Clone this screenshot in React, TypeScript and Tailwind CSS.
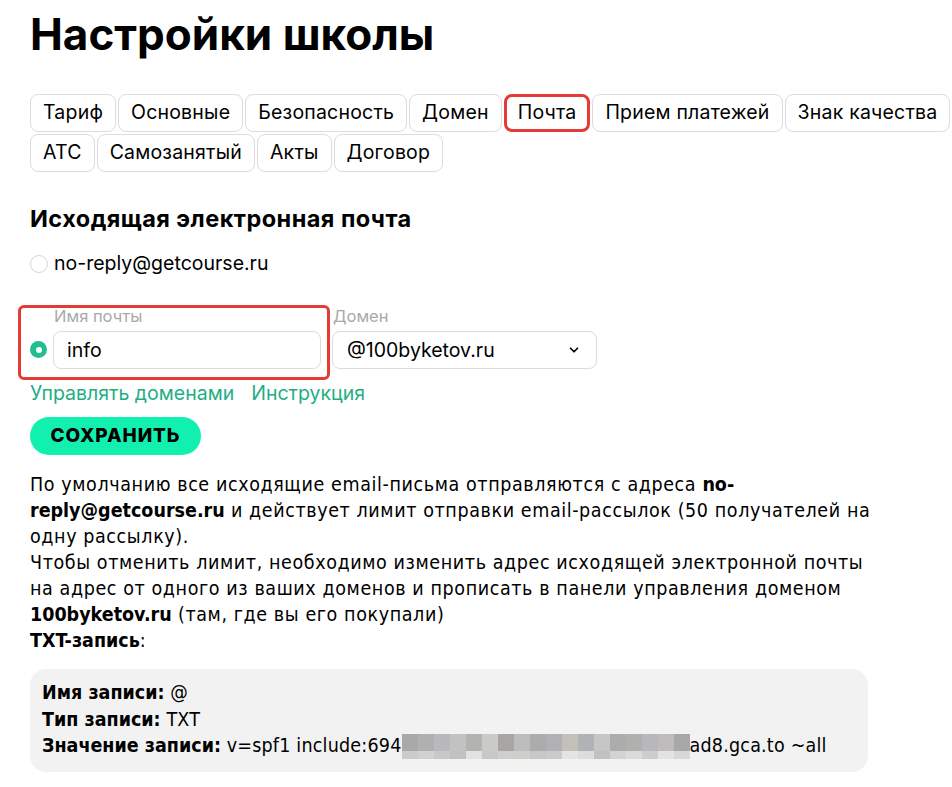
import { ChevronDown } from "lucide-react";

const heading = "font-['Inter',sans-serif]";
const body = "font-['DejaVu_Sans',sans-serif] font-stretch-condensed";

const tabsRow1 = [
  "Тариф",
  "Основные",
  "Безопасность",
  "Домен",
  "Почта",
  "Прием платежей",
  "Знак качества",
  "Интеграции",
];
const tabsRow2 = ["АТС", "Самозанятый", "Акты", "Договор"];

const blurTop = [
  "#a9a9a9", "#b0b0b0", "#b9b9bb", "#c2c2c2", "#b3b3b1", "#cacac8",
  "#a8a6a3", "#bdbdbd", "#acacac", "#b1b1b3", "#c3c0ba", "#b0b3b5",
  "#c6c6c4", "#acacae", "#b0b0ae", "#b8b8ba", "#bfbdbb", "#a8a8aa",
];
const blurBottom = [
  "#cbcbcb", "#d1d1d1", "#c8c8c8", "#c1c1c1", "#e2e2e2", "#c8c8c8",
  "#cfcfcf", "#cececa", "#c7c7c7", "#cbcbcb", "#e4e4e2", "#dcdde0",
  "#c1c1c1", "#d3d3d3", "#dddbd9", "#cdcdcf", "#e3e3e3", "#d8d8d8",
];

function Tab({ label }: { label: string }) {
  const active = label === "Почта";
  return (
    <div
      className={
        active
          ? "shrink-0 rounded-lg border-[3px] border-[#e53a35] px-[11px] h-[38px] flex items-center text-[19.5px] tracking-[0.2px] text-black"
          : "shrink-0 rounded-lg border border-[#dcdcdc] px-3 h-[38px] flex items-center text-[19.5px] tracking-[0.2px] text-black"
      }
    >
      {label}
    </div>
  );
}

export default function App() {
  return (
    <div className="min-h-screen w-full overflow-hidden bg-white text-black">
      <div className="pl-[30px] pt-[8px]">
        <h1 className={`${heading} text-[44px] font-bold leading-[52px]`}>
          Настройки школы
        </h1>

        <div className={`${heading} mt-[34px] flex flex-col gap-[2px]`}>
          <div className="flex gap-[2px] whitespace-nowrap">
            {tabsRow1.map((t) => (
              <Tab key={t} label={t} />
            ))}
          </div>
          <div className="flex gap-[2px] whitespace-nowrap">
            {tabsRow2.map((t) => (
              <Tab key={t} label={t} />
            ))}
          </div>
        </div>

        <h2 className={`${heading} mt-[32px] text-[23.5px] font-bold leading-[30px] tracking-[0.45px]`}>
          Исходящая электронная почта
        </h2>

        <div className="mt-[15px] flex items-center gap-[6px]">
          <span className="h-[18px] w-[18px] rounded-full border border-[#d6d6d6] bg-white" />
          <span className={`${heading} text-[19.5px]`}>no-reply@getcourse.ru</span>
        </div>

        <div className={`${heading} mt-[29px] flex items-start`}>
          <div className="relative flex items-end gap-[6px]">
            <div className="pointer-events-none absolute left-[-12px] top-[-2px] h-[75px] w-[312px] rounded-md border-[3px] border-[#e53a35]" />
            <span className="mb-[11px] flex h-[17px] w-[17px] items-center justify-center rounded-full bg-[#21be8f]">
              <span className="h-[6px] w-[6px] rounded-full bg-white" />
            </span>
            <div className="flex flex-col">
              <span className="pl-[1px] text-[16.5px] leading-[18px] mb-[6px] text-[#a9a9a9]">Имя почты</span>
              <div className="flex h-[38px] w-[268px] items-center rounded-lg border border-[#dcdcdc] px-[13px] text-[19.5px]">
                info
              </div>
            </div>
          </div>
          <div className="ml-[11px] flex flex-col">
            <span className="pl-[1px] text-[16.5px] leading-[18px] mb-[6px] text-[#a9a9a9]">Домен</span>
            <div className="flex h-[38px] w-[265px] items-center justify-between rounded-lg border border-[#dcdcdc] pl-[14px] pr-[15px] text-[19.5px]">
              <span>@100byketov.ru</span>
              <ChevronDown size={14} strokeWidth={3} />
            </div>
          </div>
        </div>

        <div className={`${heading} mt-[12px] flex gap-[17px] text-[19.5px] leading-[24px] text-[#1fae84]`}>
          <span>Управлять доменами</span>
          <span>Инструкция</span>
        </div>

        <button className={`${heading} mt-[12px] flex h-[38px] w-[171px] items-center justify-center rounded-full bg-[#12f0b0] text-[19px] font-extrabold tracking-[0.9px]`}>
          СОХРАНИТЬ
        </button>

        <div className={`${body} mt-[17px] w-[846px] text-[19.5px] leading-[26px] tracking-[0.6px]`}>
          <p>
            По умолчанию все исходящие email-письма отправляются с адреса{" "}
            <b className="tracking-normal">no-reply@getcourse.ru</b> и действует лимит отправки
            email-рассылок (50 получателей на одну рассылку).
          </p>
          <p>
            Чтобы отменить лимит, необходимо изменить адрес исходящей электронной почты на адрес от одного
            из ваших доменов и прописать в панели управления доменом{" "}
            <b className="tracking-normal">100byketov.ru</b> (там, где вы его покупали)
          </p>
          <p>
            <b className="tracking-normal">TXT-запись</b>:
          </p>

          <div className="mt-[15px] w-[838px] rounded-2xl bg-[#f2f2f2] px-[12px] pb-[12px] pt-[11px] leading-[26.5px] tracking-[0.2px]">
            <div>
              <b className="tracking-normal">Имя записи:</b> @
            </div>
            <div>
              <b className="tracking-normal">Тип записи:</b> TXT
            </div>
            <div className="flex items-center">
              <span className="whitespace-pre">
                <b className="tracking-normal">Значение записи:</b> v=spf1 include:694
              </span>
              <span className="flex flex-col">
                <span className="flex">
                  {blurTop.map((c, i) => (
                    <span key={i} className="h-[17px] w-[16px]" style={{ backgroundColor: c }} />
                  ))}
                </span>
                <span className="flex">
                  {blurBottom.map((c, i) => (
                    <span key={i} className="h-[8px] w-[16px]" style={{ backgroundColor: c }} />
                  ))}
                </span>
              </span>
              <span className="whitespace-pre">ad8.gca.to ~all</span>
            </div>
          </div>
        </div>
      </div>
    </div>
  );
}
